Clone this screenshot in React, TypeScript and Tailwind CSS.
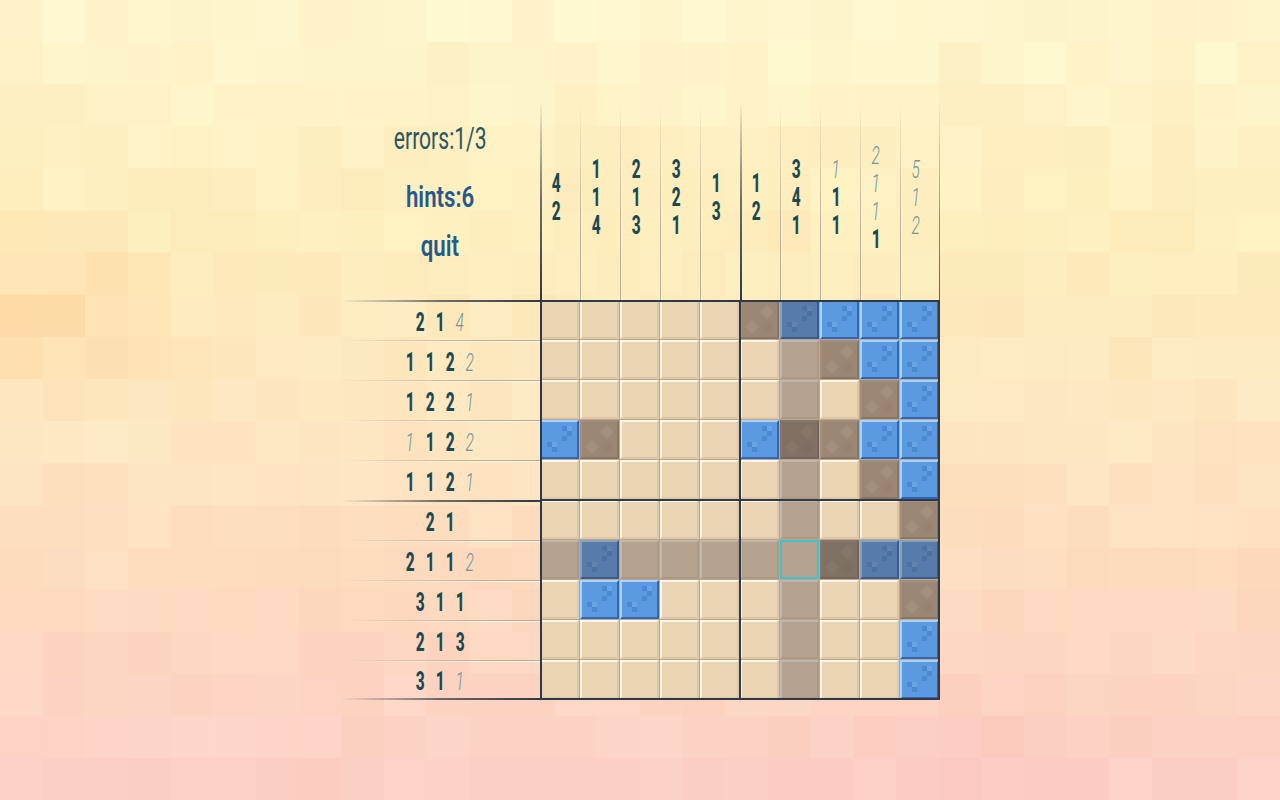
import clsx from "clsx";

// board legend: . empty, x crossed, b filled, c cursor (empty)
const BOARD = [
  ".....xbbbb",
  ".......xbb",
  "........xb",
  "bx...bxxbb",
  "........xb",
  ".........x",
  ".b....cxbb",
  ".bb......x",
  ".........b",
  ".........b",
];
const HL_ROW = 6;
const HL_COL = 6;

// a trailing * marks a clue that is already satisfied
const COL_CLUES = ["4 2", "1 1 4", "2 1 3", "3 2 1", "1 3", "1 2", "3 4 1", "1* 1 1", "2* 1* 1* 1", "5* 1* 2*"];
const ROW_CLUES = ["2 1 4*", "1 1 2 2*", "1 2 2 1*", "1* 1 2 2*", "1 1 2 1*", "2 1", "2 1 1 2*", "3 1 1", "2 1 3", "3 1 1*"];

type Clue = { n: string; done: boolean };
const parse = (s: string): Clue[] => s.split(" ").map((t) => ({ n: t.replace("*", ""), done: t.endsWith("*") }));

// ---- pixel mosaic backdrop ----
const STOPS: [number, number[]][] = [
  [0, [254, 246, 206]],
  [0.3, [254, 237, 188]],
  [0.55, [253, 230, 193]],
  [0.75, [253, 218, 192]],
  [1, [252, 206, 198]],
];
const mix = (a: number[], b: number[], t: number) => a.map((v, i) => v + (b[i] - v) * t);
function sample(y: number) {
  for (let i = 0; i < STOPS.length - 1; i++) {
    const [y0, c0] = STOPS[i];
    const [y1, c1] = STOPS[i + 1];
    if (y <= y1) return mix(c0, c1, (y - y0) / (y1 - y0));
  }
  return STOPS[STOPS.length - 1][1];
}
function hash(c: number, r: number) {
  const s = Math.sin(c * 12.9898 + r * 78.233) * 43758.5453;
  return s - Math.floor(s);
}
function tileColor(c: number, r: number) {
  const x = (c + 0.5) / 30;
  const y = (r + 0.5) / 19;
  let col = sample(y);
  const orange = Math.max(0, 1 - Math.hypot((x - 0.03) / 0.14, (y - 0.4) / 0.13));
  col = mix(col, [253, 214, 162], orange * 0.75);
  const pink = Math.max(0, 1 - Math.hypot((x - 0.75) / 0.12, (y - 0.95) / 0.12));
  col = mix(col, [252, 194, 186], pink * 0.6);
  const n = (hash(c, r) - 0.5) * 7;
  const ch = (v: number) => Math.max(0, Math.min(255, Math.round(v)));
  return `rgb(${ch(col[0] + n * 0.2)},${ch(col[1] + n)},${ch(col[2] + n * 1.3)})`;
}

function Backdrop() {
  const w = 1280 / 30;
  const h = 800 / 19;
  const tiles = [];
  for (let r = 0; r < 19; r++)
    for (let c = 0; c < 30; c++)
      tiles.push(<rect key={`${r}-${c}`} x={c * w} y={r * h} width={w + 0.5} height={h + 0.5} fill={tileColor(c, r)} />);
  return (
    <svg className="absolute inset-0 h-full w-full" viewBox="0 0 1280 800" preserveAspectRatio="none">
      {tiles}
    </svg>
  );
}

// ---- clues ----
function Num({ c }: { c: Clue }) {
  return (
    <span
      className={clsx(
        "inline-block scale-x-[0.62] text-[25px] leading-none",
        c.done ? "font-light italic text-[#6f969d]" : "font-extrabold text-[#1b4855]"
      )}
    >
      {c.n}
    </span>
  );
}

function VLine({ dark }: { dark?: boolean }) {
  if (dark) return <div className="w-[2px] shrink-0 bg-linear-to-b from-transparent via-[#2e3a47]/70 via-50% to-[#2e3a47]" />;
  return (
    <>
      <div className="w-px shrink-0 bg-linear-to-b from-transparent via-[#c2b39c] via-60% to-[#bcaa92]" />
      <div className="w-px shrink-0 bg-linear-to-b from-transparent to-[#fff7e8]" />
    </>
  );
}

function HLine({ dark }: { dark?: boolean }) {
  if (dark) return <div className="h-[2px] shrink-0 bg-linear-to-r from-transparent via-[#2e3a47]/70 via-50% to-[#2e3a47]" />;
  return (
    <>
      <div className="h-px shrink-0 bg-linear-to-r from-transparent via-[#c2b39c] via-60% to-[#bcaa92]" />
      <div className="h-px shrink-0 bg-linear-to-r from-transparent to-[#fff7e8]" />
    </>
  );
}

function Status() {
  return (
    <div className="flex flex-col items-center">
      <div className="mt-[23px] h-[32px] text-[31px] leading-[32px] text-[#2b5661]">
        <span className="inline-block scale-x-[0.68]">errors:1/3</span>
      </div>
      <div className="mt-[26px] h-[32px] text-[30px] font-semibold leading-[32px] text-[#265a8c]">
        <span className="inline-block scale-x-[0.74]">hints:6</span>
      </div>
      <div className="mt-[17px] h-[32px] text-[30px] font-semibold leading-[32px] text-[#265a8c]">
        <span className="inline-block scale-x-[0.74]">quit</span>
      </div>
    </div>
  );
}

function ColumnClues() {
  return (
    <div className="flex h-[200px] w-[400px]">
      {COL_CLUES.map((clue, i) => (
        <div key={i} className="flex w-[40px]">
          <VLine dark={i === 0 || i === 5} />
          <div className="flex flex-1 flex-col items-center justify-center pb-[6px] pr-[10px]">
            {parse(clue).map((c, j) => (
              <div key={j} className="flex h-[28px] items-center">
                <Num c={c} />
              </div>
            ))}
          </div>
          {i === 9 && <div className="w-px shrink-0 bg-linear-to-b from-transparent via-[#8d8a86] via-60% to-[#5c6068]" />}
        </div>
      ))}
    </div>
  );
}

function RowClues() {
  return (
    <div className="flex h-[400px] w-[200px] flex-col">
      {ROW_CLUES.map((clue, i) => (
        <div key={i} className="flex h-[40px] flex-col">
          <HLine dark={i === 0 || i === 5} />
          <div className={clsx("flex items-center justify-center pt-[3px]", i === 9 ? "h-[36px]" : "h-[38px]")}>
            {parse(clue).map((c, j) => (
              <div key={j} className="flex w-[20px] justify-center">
                <Num c={c} />
              </div>
            ))}
          </div>
          {i === 9 && <HLine dark />}
        </div>
      ))}
    </div>
  );
}

// ---- board ----
function Empty() {
  return (
    <div className="h-full w-full border-2 border-t-[#fdf5e6] border-l-[#fdf5e6] border-r-[#dfc6a5] border-b-[#dfc6a5] bg-[#ebd4b4]" />
  );
}

function Filled() {
  return (
    <div className="h-full w-full border-2 border-t-[#a9d2f6] border-l-[#a9d2f6] border-r-[#2f66b9] border-b-[#2f66b9] bg-[#5b9ae1]">
      <svg viewBox="0 0 35 35" className="h-full w-full">
        <g fill="#3b75c6" opacity="0.45">
          <rect x="20" y="4" width="5" height="5" />
          <rect x="25" y="9" width="5" height="5" />
          <rect x="20" y="14" width="5" height="5" />
          <rect x="5" y="20" width="5" height="5" />
          <rect x="10" y="25" width="5" height="5" />
        </g>
        <g fill="#8cc0f0" opacity="0.3">
          <rect x="25" y="4" width="5" height="5" />
          <rect x="10" y="20" width="5" height="5" />
        </g>
      </svg>
    </div>
  );
}

function Crossed() {
  return (
    <div className="h-full w-full border-2 border-t-[#a48f7c] border-l-[#a48f7c] border-r-[#8b7662] border-b-[#8b7662] bg-[#9c8774]">
      <svg viewBox="0 0 35 35" className="h-full w-full">
        <g fill="#ffffff" opacity="0.07">
          <polygon points="10,18 17,25 10,32 3,25" />
          <polygon points="25,3 32,10 25,17 18,10" />
        </g>
        <g fill="#5a4536" opacity="0.06">
          <polygon points="25,18 32,25 25,32 18,25" />
        </g>
      </svg>
    </div>
  );
}

function Board() {
  return (
    <div className="relative grid h-[400px] w-[400px] grid-cols-[repeat(10,40px)] grid-rows-[repeat(10,40px)]">
      {BOARD.flatMap((row, r) =>
        row.split("").map((t, c) => (
          <div key={`${r}-${c}`} className="relative border-b border-r border-[#b9a78f]">
            {t === "b" ? <Filled /> : t === "x" ? <Crossed /> : <Empty />}
            {(r === HL_ROW || c === HL_COL) && <div className="absolute inset-0 bg-[#4f4648]/35" />}
            {t === "c" && <div className="absolute inset-0 border-2 border-[#3cc3cb]" />}
          </div>
        ))
      )}
      <div className="pointer-events-none absolute inset-0 border-2 border-[#2e3a47]" />
      <div className="pointer-events-none absolute left-[199px] top-0 h-full w-[2px] bg-[#2e3a47]" />
      <div className="pointer-events-none absolute left-0 top-[199px] h-[2px] w-full bg-[#2e3a47]" />
    </div>
  );
}

export default function App() {
  return (
    <div className="relative h-screen w-full overflow-hidden font-['Roboto',sans-serif]">
      <Backdrop />
      <div className="relative flex h-full items-center justify-center">
        <div className="grid grid-cols-[200px_400px] grid-rows-[200px_400px]">
          <Status />
          <ColumnClues />
          <RowClues />
          <Board />
        </div>
      </div>
    </div>
  );
}
